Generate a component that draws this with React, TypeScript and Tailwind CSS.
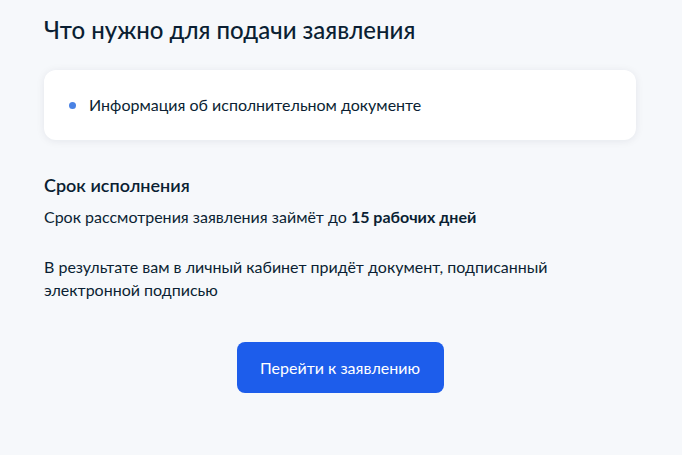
export default function App() {
  return (
    <div className="min-h-[455px] w-full bg-[#f6f8fb] font-['Lato','Liberation_Sans',sans-serif] text-[#0b1f33]">
      <div className="px-[44px] pt-[14px]">
        <h2 className="text-[24px] font-medium leading-[32px]">Что нужно для подачи заявления</h2>

        <div className="mt-[24px] w-[592px] rounded-[12px] bg-white px-[25px] py-[24px] shadow-[0_1px_8px_rgba(11,31,51,0.08)]">
          <div className="flex items-center gap-[13px]">
            <span className="h-[7px] w-[7px] shrink-0 rounded-full bg-[#4a82e4]" />
            <span className="text-[16px] leading-[22px]">Информация об исполнительном документе</span>
          </div>
        </div>

        <h3 className="mt-[34px] text-[18px] font-semibold leading-[22px]">Срок исполнения</h3>
        <p className="mt-[9px] text-[16px] leading-[24px]">
          Срок рассмотрения заявления займёт до <b className="font-bold">15 рабочих дней</b>
        </p>
        <p className="mt-[26px] w-[540px] text-[16px] leading-[23px]">
          В результате вам в личный кабинет придёт документ, подписанный электронной подписью
        </p>

        <div className="mt-[41px] flex w-[592px] justify-center">
          <button className="h-[51px] w-[207px] rounded-[8px] bg-[#1d5deb] text-[16px] text-white">
            Перейти к заявлению
          </button>
        </div>
      </div>
    </div>
  )
}
